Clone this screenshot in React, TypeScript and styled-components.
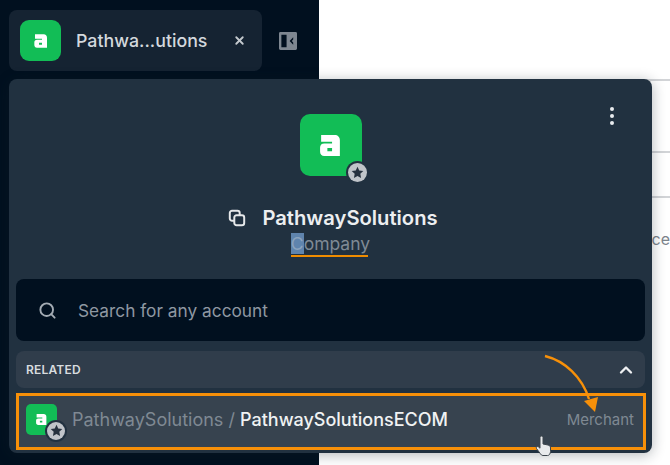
import React from "react";
import styled, { createGlobalStyle } from "styled-components";
import { ChevronUp, Search, X } from "lucide-react";

const Global = createGlobalStyle`
  html, body { margin: 0; padding: 0; background: #fff; }
  body { font-family: Inter, "Liberation Sans", sans-serif; }
  * { box-sizing: border-box; }
`;

const Page = styled.div`
  position: relative;
  width: 670px;
  height: 465px;
  display: flex;
  overflow: hidden;
  background: #fff;
`;

const Sidebar = styled.aside`
  width: 319px;
  flex: none;
  background: #01101f;
  padding: 10px 0 0 9px;
  display: flex;
  align-items: flex-start;
  gap: 17px;
`;

const Tab = styled.div`
  width: 253px;
  height: 61px;
  background: #152332;
  border-radius: 8px;
  display: flex;
  align-items: center;
  padding-left: 11px;
`;

const TabName = styled.span`
  margin-left: 15px;
  width: 157px;
  color: #d3d8dd;
  font-size: 17.8px;
  font-weight: 500;
  white-space: nowrap;
`;

const CloseButton = styled.span`
  display: flex;
  color: #c4c9ce;
`;

const CollapseIcon = styled.svg`
  margin-top: 22px;
`;

const Main = styled.main`
  flex: 1;
  display: flex;
  flex-direction: column;
  padding-top: 79px;
`;

const Rule = styled.div<{ $gap: number }>`
  height: 2px;
  margin-top: ${(p) => p.$gap}px;
  background: #d2d4d7;
`;

const ClippedText = styled.div`
  margin-top: 31px;
  text-align: right;
  color: #7d848c;
  font-size: 16px;
  line-height: 20px;
  white-space: nowrap;
`;

const Panel = styled.section`
  position: absolute;
  left: 9px;
  top: 79px;
  width: 643px;
  height: 374px;
  background: #213140;
  border-radius: 8px;
  box-shadow: 0 2px 14px rgba(20, 30, 40, 0.32);
  padding: 35px 7px 0;
  display: flex;
  flex-direction: column;
`;

const MoreDots = styled.div`
  position: absolute;
  right: 38px;
  top: 28px;
  display: flex;
  flex-direction: column;
  gap: 3px;
`;

const Dot = styled.i`
  width: 4px;
  height: 4px;
  border-radius: 50%;
  background: #e8ebee;
`;

const Identity = styled.div`
  display: flex;
  flex-direction: column;
  align-items: center;
`;

const LogoWrap = styled.div<{ $size: number; $radius: number }>`
  position: relative;
  width: ${(p) => p.$size}px;
  height: ${(p) => p.$size}px;
  flex: none;
  background: #12bd56;
  border-radius: ${(p) => p.$radius}px;
  display: flex;
  align-items: center;
  justify-content: center;
`;

const Badge = styled.span<{ $size: number; $right: number; $bottom: number }>`
  position: absolute;
  right: -${(p) => p.$right}px;
  bottom: -${(p) => p.$bottom}px;
  width: ${(p) => p.$size}px;
  height: ${(p) => p.$size}px;
  border-radius: 50%;
  background: #c0c4c9;
  box-shadow: 0 0 0 2px #213140;
  display: flex;
  align-items: center;
  justify-content: center;
`;

const TitleRow = styled.div`
  margin-top: 30px;
  padding-left: 5px;
  display: flex;
  align-items: center;
  gap: 16px;
`;

const Title = styled.h1`
  margin: 0;
  color: #eceef0;
  font-size: 20.2px;
  line-height: 24px;
  font-weight: 600;
`;

const Subtitle = styled.div`
  position: relative;
  margin-top: 2px;
  color: #7f8a95;
  font-size: 17.5px;
  line-height: 23px;
`;

const Selected = styled.span`
  background: #5f84ad;
  color: #8ba3bd;
`;

const Underline = styled.span`
  position: absolute;
  left: 0;
  right: 2px;
  bottom: -2px;
  height: 2px;
  background: #f08c00;
`;

const SearchBox = styled.div`
  margin-top: 24px;
  height: 62px;
  background: #01101f;
  border-radius: 8px;
  display: flex;
  align-items: center;
  padding-left: 22px;
  gap: 21px;
  color: #8f98a2;
  font-size: 17.3px;
`;

const SearchIcon = styled(Search)`
  flex: none;
  color: #a4acb4;
`;

const RelatedHeader = styled.div`
  margin-top: 10px;
  height: 37px;
  background: #303d4b;
  border-radius: 8px;
  display: flex;
  align-items: center;
  justify-content: space-between;
  padding: 0 9px 0 10px;
  color: #d8dcdf;
  font-size: 12px;
  font-weight: 600;
  letter-spacing: 0.2px;
`;

const Chevron = styled(ChevronUp)`
  color: #eef0f2;
`;

const RelatedRow = styled.div`
  margin-top: 5px;
  margin-right: -1px;
  height: 57px;
  background: #37434f;
  border: 3px solid #f79009;
  display: flex;
  align-items: center;
  padding: 0 9px 5px 7px;
`;

const Path = styled.div`
  margin-left: 15px;
  flex: 1;
  font-size: 18px;
  color: #7f8993;
  white-space: nowrap;
`;

const PathStrong = styled.span`
  color: #f0f2f3;
  font-weight: 500;
`;

const RowType = styled.span`
  color: #7f8993;
  font-size: 15px;
`;

const ArrowMark = styled.svg`
  position: absolute;
  left: 535px;
  top: 345px;
`;

const HandCursor = styled.svg`
  position: absolute;
  left: 534px;
  top: 435px;
`;

function LogoMark({ size }: { size: number }) {
  return (
    <svg width={size} height={size} viewBox="0 0 24 24" aria-hidden="true">
      <path
        fill="#fff"
        fillRule="evenodd"
        d="M3 2H16C19 2 21 4 21 7V22H6C3.5 22 2 20.5 2 18V14C2 11.5 3.5 10 6 10H13.5V8.5H3ZM9 14.5V17.5H13.5V14.5Z"
      />
    </svg>
  );
}

function StarBadge({ size, right, bottom }: { size: number; right: number; bottom: number }) {
  const star = Math.round(size * 0.7);
  return (
    <Badge $size={size} $right={right} $bottom={bottom}>
      <svg width={star} height={star} viewBox="0 0 24 24" aria-hidden="true">
        <path fill="#26313e" d="M12 1.5l3.2 6.9 7.5.9-5.5 5.2 1.4 7.5L12 18.4l-6.6 3.6 1.4-7.5L1.3 9.3l7.5-.9z" />
      </svg>
    </Badge>
  );
}

export default function App() {
  return (
    <Page>
      <Global />
      <Sidebar>
        <Tab>
          <LogoWrap $size={41} $radius={9}>
            <LogoMark size={16} />
          </LogoWrap>
          <TabName>Pathwa...utions</TabName>
          <CloseButton>
            <X size={13} strokeWidth={3.4} />
          </CloseButton>
        </Tab>
        <CollapseIcon width="18" height="18" viewBox="0 0 19 19" aria-hidden="true">
          <path
            fill="#7e8791"
            fillRule="evenodd"
            d="M1.5 0H17.5A1.5 1.5 0 0 1 19 1.5V17.5A1.5 1.5 0 0 1 17.5 19H1.5A1.5 1.5 0 0 1 0 17.5V1.5A1.5 1.5 0 0 1 1.5 0ZM2.5 3V16H8V3ZM15 5.5L11.2 9.5L15 13.5V11.2L13.5 9.5L15 7.8Z"
          />
        </CollapseIcon>
      </Sidebar>
      <Main>
        <Rule $gap={0} />
        <Rule $gap={70} />
        <Rule $gap={43} />
        <ClippedText>Balance</ClippedText>
      </Main>
      <Panel>
        <MoreDots>
          <Dot />
          <Dot />
          <Dot />
        </MoreDots>
        <Identity>
          <LogoWrap $size={62} $radius={10}>
            <LogoMark size={25} />
            <StarBadge size={19} right={5} bottom={6} />
          </LogoWrap>
          <TitleRow>
            <svg width="18" height="18" viewBox="0 0 20 20" fill="none" stroke="#e6e8ea" strokeWidth="2.2" aria-hidden="true">
              <rect x="2" y="2" width="11" height="11" rx="2.5" />
              <rect x="7" y="7" width="11" height="11" rx="2.5" fill="#213140" />
            </svg>
            <Title>PathwaySolutions</Title>
          </TitleRow>
          <Subtitle>
            <Selected>C</Selected>ompany
            <Underline />
          </Subtitle>
        </Identity>
        <SearchBox>
          <SearchIcon size={19} strokeWidth={2.4} />
          Search for any account
        </SearchBox>
        <RelatedHeader>
          RELATED
          <Chevron size={20} strokeWidth={2.8} />
        </RelatedHeader>
        <RelatedRow>
          <LogoWrap $size={31} $radius={5}>
            <LogoMark size={13} />
            <StarBadge size={18} right={8} bottom={5} />
          </LogoWrap>
          <Path>
            PathwaySolutions / <PathStrong>PathwaySolutionsECOM</PathStrong>
          </Path>
          <RowType>Merchant</RowType>
        </RelatedRow>
      </Panel>
      <ArrowMark width="70" height="72" viewBox="0 0 70 72" fill="none" aria-hidden="true">
        <path d="M10 11C30 16 47 32 54 54" stroke="#f79009" strokeWidth="2.4" />
        <path d="M49 56L63 52L60 67Z" fill="#f79009" />
      </ArrowMark>
      <HandCursor width="20" height="24" viewBox="0 0 20 24" aria-hidden="true">
        <path
          fill="#e8eaec"
          stroke="#3c444c"
          strokeWidth="1"
          d="M6 2.5a1.5 1.5 0 0 1 3 0V9l5 1c1.8.4 2.5 1.4 2.5 3v3.5c0 2-1.2 4-3 4H9c-1.3 0-2-.8-2.8-2L2.5 13.5c-.8-1.2.8-2.6 2-1.6L6 13.2Z"
        />
      </HandCursor>
    </Page>
  );
}
